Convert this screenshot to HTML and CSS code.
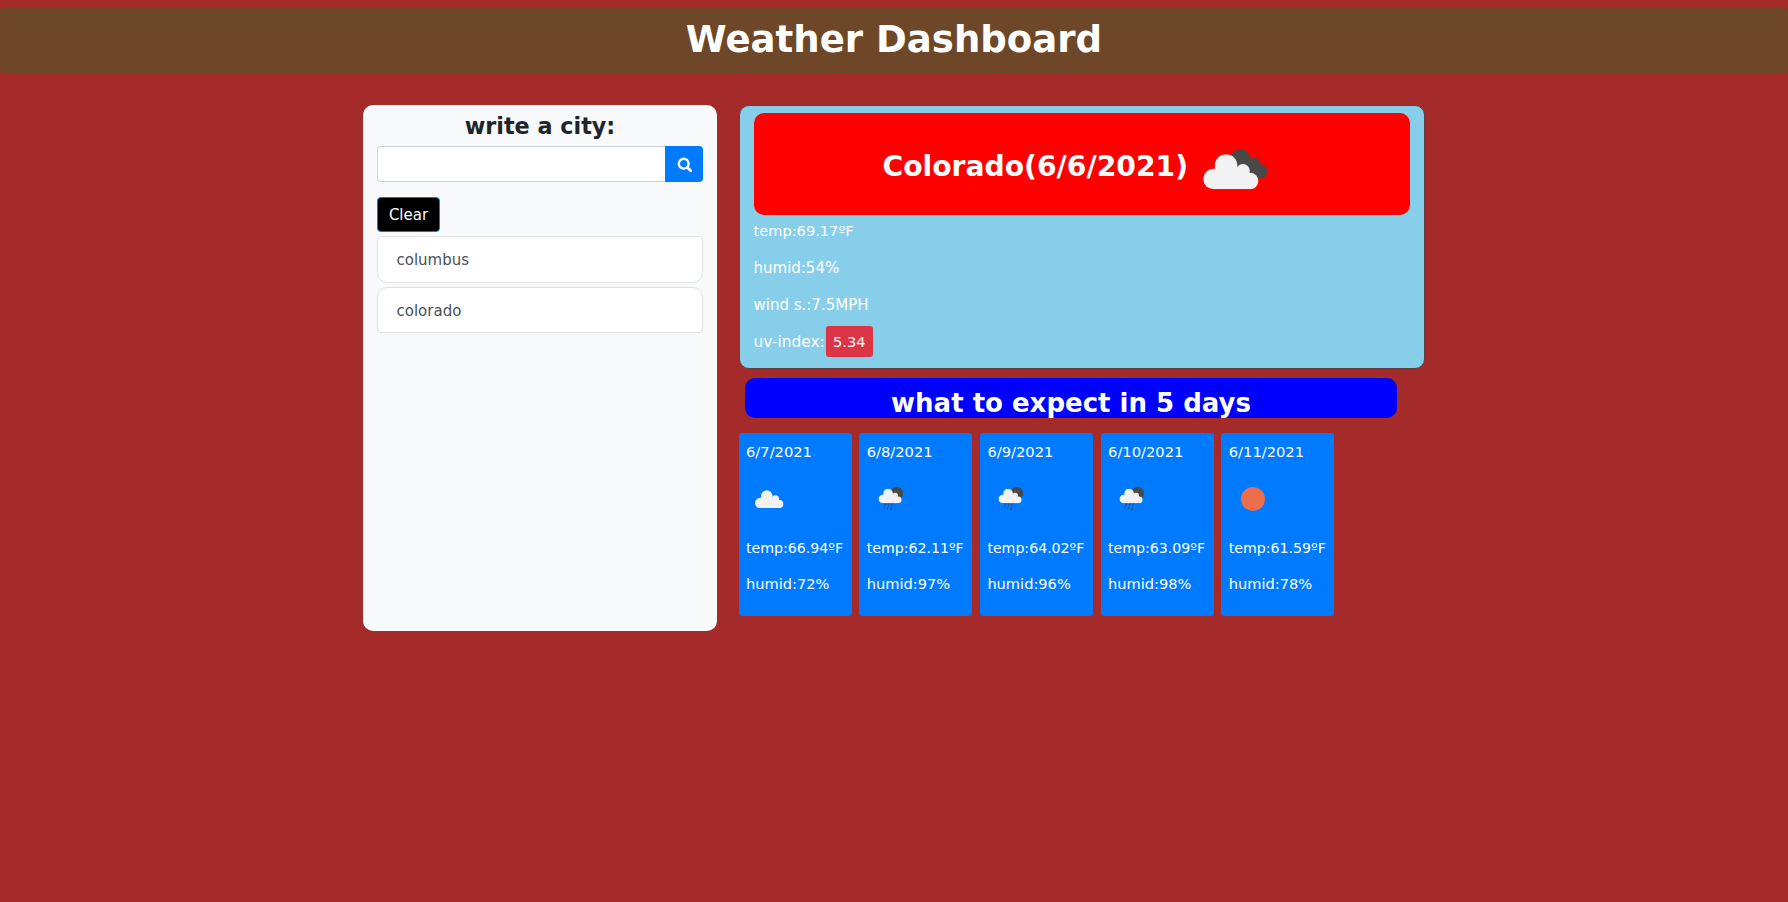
FILE: index.html
```
<!DOCTYPE html>
<html lang="en">
<head>
<meta charset="utf-8">
<title>Weather Dashboard</title>
<link rel="stylesheet" href="styles.css">
</head>
<body>
<svg class="defs" aria-hidden="true">
  <symbol id="cloud" viewBox="0 0 167 106">
    <circle cx="31" cy="75" r="31"/><circle cx="69" cy="34" r="34"/><circle cx="120" cy="50" r="21"/><circle cx="142" cy="81" r="25"/><path d="M31 106V44H90L120 40L142 70V106Z"/>
  </symbol>
  <symbol id="rain" viewBox="0 0 76 72">
    <circle cx="56" cy="19" r="19" fill="#484848"/>
    <use href="#cloud" x="1" y="5" width="70" height="44" fill="#f2f2f2"/>
    <path stroke="#304a68" stroke-width="3" stroke-linecap="round" d="M23 50l-3 6M33 50l-2 4M43 50l-3 6M18 61l-1 2M30 60l-3 7M40 63l-2 6"/>
  </symbol>
</svg>
<header class="banner"><h1>Weather Dashboard</h1></header>
<main class="layout">
  <aside class="search">
    <h2>write a city:</h2>
    <form class="field">
      <input type="text" aria-label="City">
      <button type="button" aria-label="Search"><svg viewBox="0 0 16 16"><circle cx="6.700" cy="6.700" r="4.900" fill="none" stroke="#fff" stroke-width="2.400"/><path d="M10.500 10.500l3.200 3.200" stroke="#fff" stroke-width="2.800" stroke-linecap="round"/></svg></button>
    </form>
    <button class="clear" type="button">Clear</button>
    <ul class="history"><li>columbus</li><li>colorado</li></ul>
  </aside>
  <section class="results">
    <article class="current">
      <div class="place">
        <h2>Colorado(6/6/2021)</h2>
        <svg class="icon-now" viewBox="0 0 195 121">
          <g fill="#484848"><circle cx="112" cy="31" r="30"/><circle cx="150" cy="45" r="21"/><circle cx="171" cy="67" r="22"/><path d="M100 40h50l20 49-50-10z"/></g>
          <use href="#cloud" x="0" y="16" width="167" height="105" fill="#f2f2f2"/>
        </svg>
      </div>
      <p class="t-temp">temp:69.17ºF</p>
      <p>humid:54%</p>
      <p>wind s.:7.5MPH</p>
      <p class="uv"><span>uv-index:</span><b>5.34</b></p>
    </article>
    <h2 class="outlook">what to expect in 5 days</h2>
    <div class="days">
      <article class="day"><p>6/7/2021</p><div class="pic"><svg class="i-cloud"><use href="#cloud" fill="#f2f2f2"/></svg></div><p class="t">temp:66.94ºF</p><p class="h">humid:72%</p></article>
      <article class="day"><p>6/8/2021</p><div class="pic"><svg class="i-rain"><use href="#rain"/></svg></div><p class="t">temp:62.11ºF</p><p class="h">humid:97%</p></article>
      <article class="day"><p>6/9/2021</p><div class="pic"><svg class="i-rain"><use href="#rain"/></svg></div><p class="t">temp:64.02ºF</p><p class="h">humid:96%</p></article>
      <article class="day"><p>6/10/2021</p><div class="pic"><svg class="i-rain"><use href="#rain"/></svg></div><p class="t">temp:63.09ºF</p><p class="h">humid:98%</p></article>
      <article class="day"><p>6/11/2021</p><div class="pic"><span class="sun"></span></div><p class="t">temp:61.59ºF</p><p class="h">humid:78%</p></article>
    </div>
  </section>
</main>
</body>
</html>
```
FILE: styles.css
```
* { box-sizing: border-box; }
body {
  margin: 0;
  padding-top: 7px;
  min-height: 902px;
  background: #a52a2a;
  color: #fff;
  font-family: Verdana, "DejaVu Sans", sans-serif;
  font-size: 15px;
  overflow: hidden;
}
h1, h2, p, ul { margin: 0; padding: 0; }
button { font: inherit; color: inherit; }
.defs { position: absolute; width: 0; height: 0; }
.banner {
  height: 67px;
  border-radius: 5px;
  background: #6d4727;
  text-align: center;
}
.banner h1 { font-size: 37.1px; line-height: 65px; }
.layout {
  display: flex;
  align-items: flex-start;
  gap: 21.5px;
  margin: 30.5px 0 0 363px;
}
.search {
  width: 354px;
  height: 526px;
  padding: 8px 14px;
  border-radius: 10px;
  background: #f8f9fa;
  color: #212529;
}
.search h2 {
  font-size: 22.3px;
  line-height: 27px;
  text-align: center;
}
.field { display: flex; margin-top: 6.5px; height: 36px; }
.field input {
  flex: 1;
  min-width: 0;
  border: 1px solid #ced4da;
  border-right: 0;
  border-radius: 4px 0 0 4px;
  background: #fff;
}
.field button {
  width: 38px;
  padding: 0;
  border: 0;
  border-radius: 0 4px 4px 0;
  background: #007bff;
  display: grid;
  place-items: center;
}
.field svg { width: 16px; height: 16px; margin: 2px 0 0 1px; }
.clear {
  display: block;
  width: 63px;
  height: 35px;
  margin-top: 14.5px;
  padding: 1px 0 0;
  border: 1px solid #007bff;
  border-radius: 4px;
  background: #000;
  color: #fff;
}
.history { list-style: none; margin-top: 4.5px; }
.history li {
  height: 46.5px;
  margin-bottom: 4px;
  padding-left: 18.5px;
  border: 1px solid #e1e2e4;
  border-radius: 4px 4px 10px 10px;
  background: #fff;
  color: #495057;
  line-height: 46.5px;
}
.history li + li { border-radius: 10px 10px 4px 4px; }
.current {
  width: 686.5px;
  height: 264px;
  padding: 7px 14px;
  border: 1px solid #644044;
  border-radius: 10px;
  background: #87ceeb;
}
.place {
  display: flex;
  align-items: center;
  justify-content: center;
  gap: 15px;
  height: 102px;
  padding: 7px 13px 0 0;
  border-radius: 10px;
  background: #f00;
}
.place h2 { font-size: 28.2px; line-height: 34px; }
.icon-now { width: 65px; height: 40.3px; margin-top: 5px; }
.current p { height: 37.2px; line-height: 32px; }
.current .t-temp { font-size: 14.6px; line-height: 31px; }
.current .uv { display: flex; gap: 1px; font-size: 15.4px; }
.uv b {
  width: 47px;
  height: 31px;
  border-radius: 3px;
  background: #dc3545;
  font-size: 14.6px;
  font-weight: 400;
  text-align: center;
}
.outlook {
  width: 652px;
  height: 40px;
  margin: 9.5px 0 0 6.5px;
  border-radius: 10px;
  background: #00f;
  font-size: 26px;
  line-height: 51px;
  text-align: center;
}
.days { display: flex; gap: 7.7px; margin-top: 15px; }
.day {
  width: 113px;
  height: 183px;
  padding: 8px 0 0 7.5px;
  border-radius: 3px;
  background: #007bff;
  font-size: 14.7px;
  line-height: 22px;
}
.day .t { font-size: 14.15px; margin-top: 12px; }
.day .h { font-size: 14.6px; margin-top: 13.5px; }
.pic { height: 62px; padding-top: 10px; display: flex; align-items: center; }
.i-cloud { width: 28.5px; height: 18.5px; margin-left: 9px; }
.i-rain { width: 25.5px; height: 24px; margin-left: 11px; }
.sun { width: 24px; height: 24px; margin-left: 12px; border-radius: 50%; background: #ec6e4c; }
```
